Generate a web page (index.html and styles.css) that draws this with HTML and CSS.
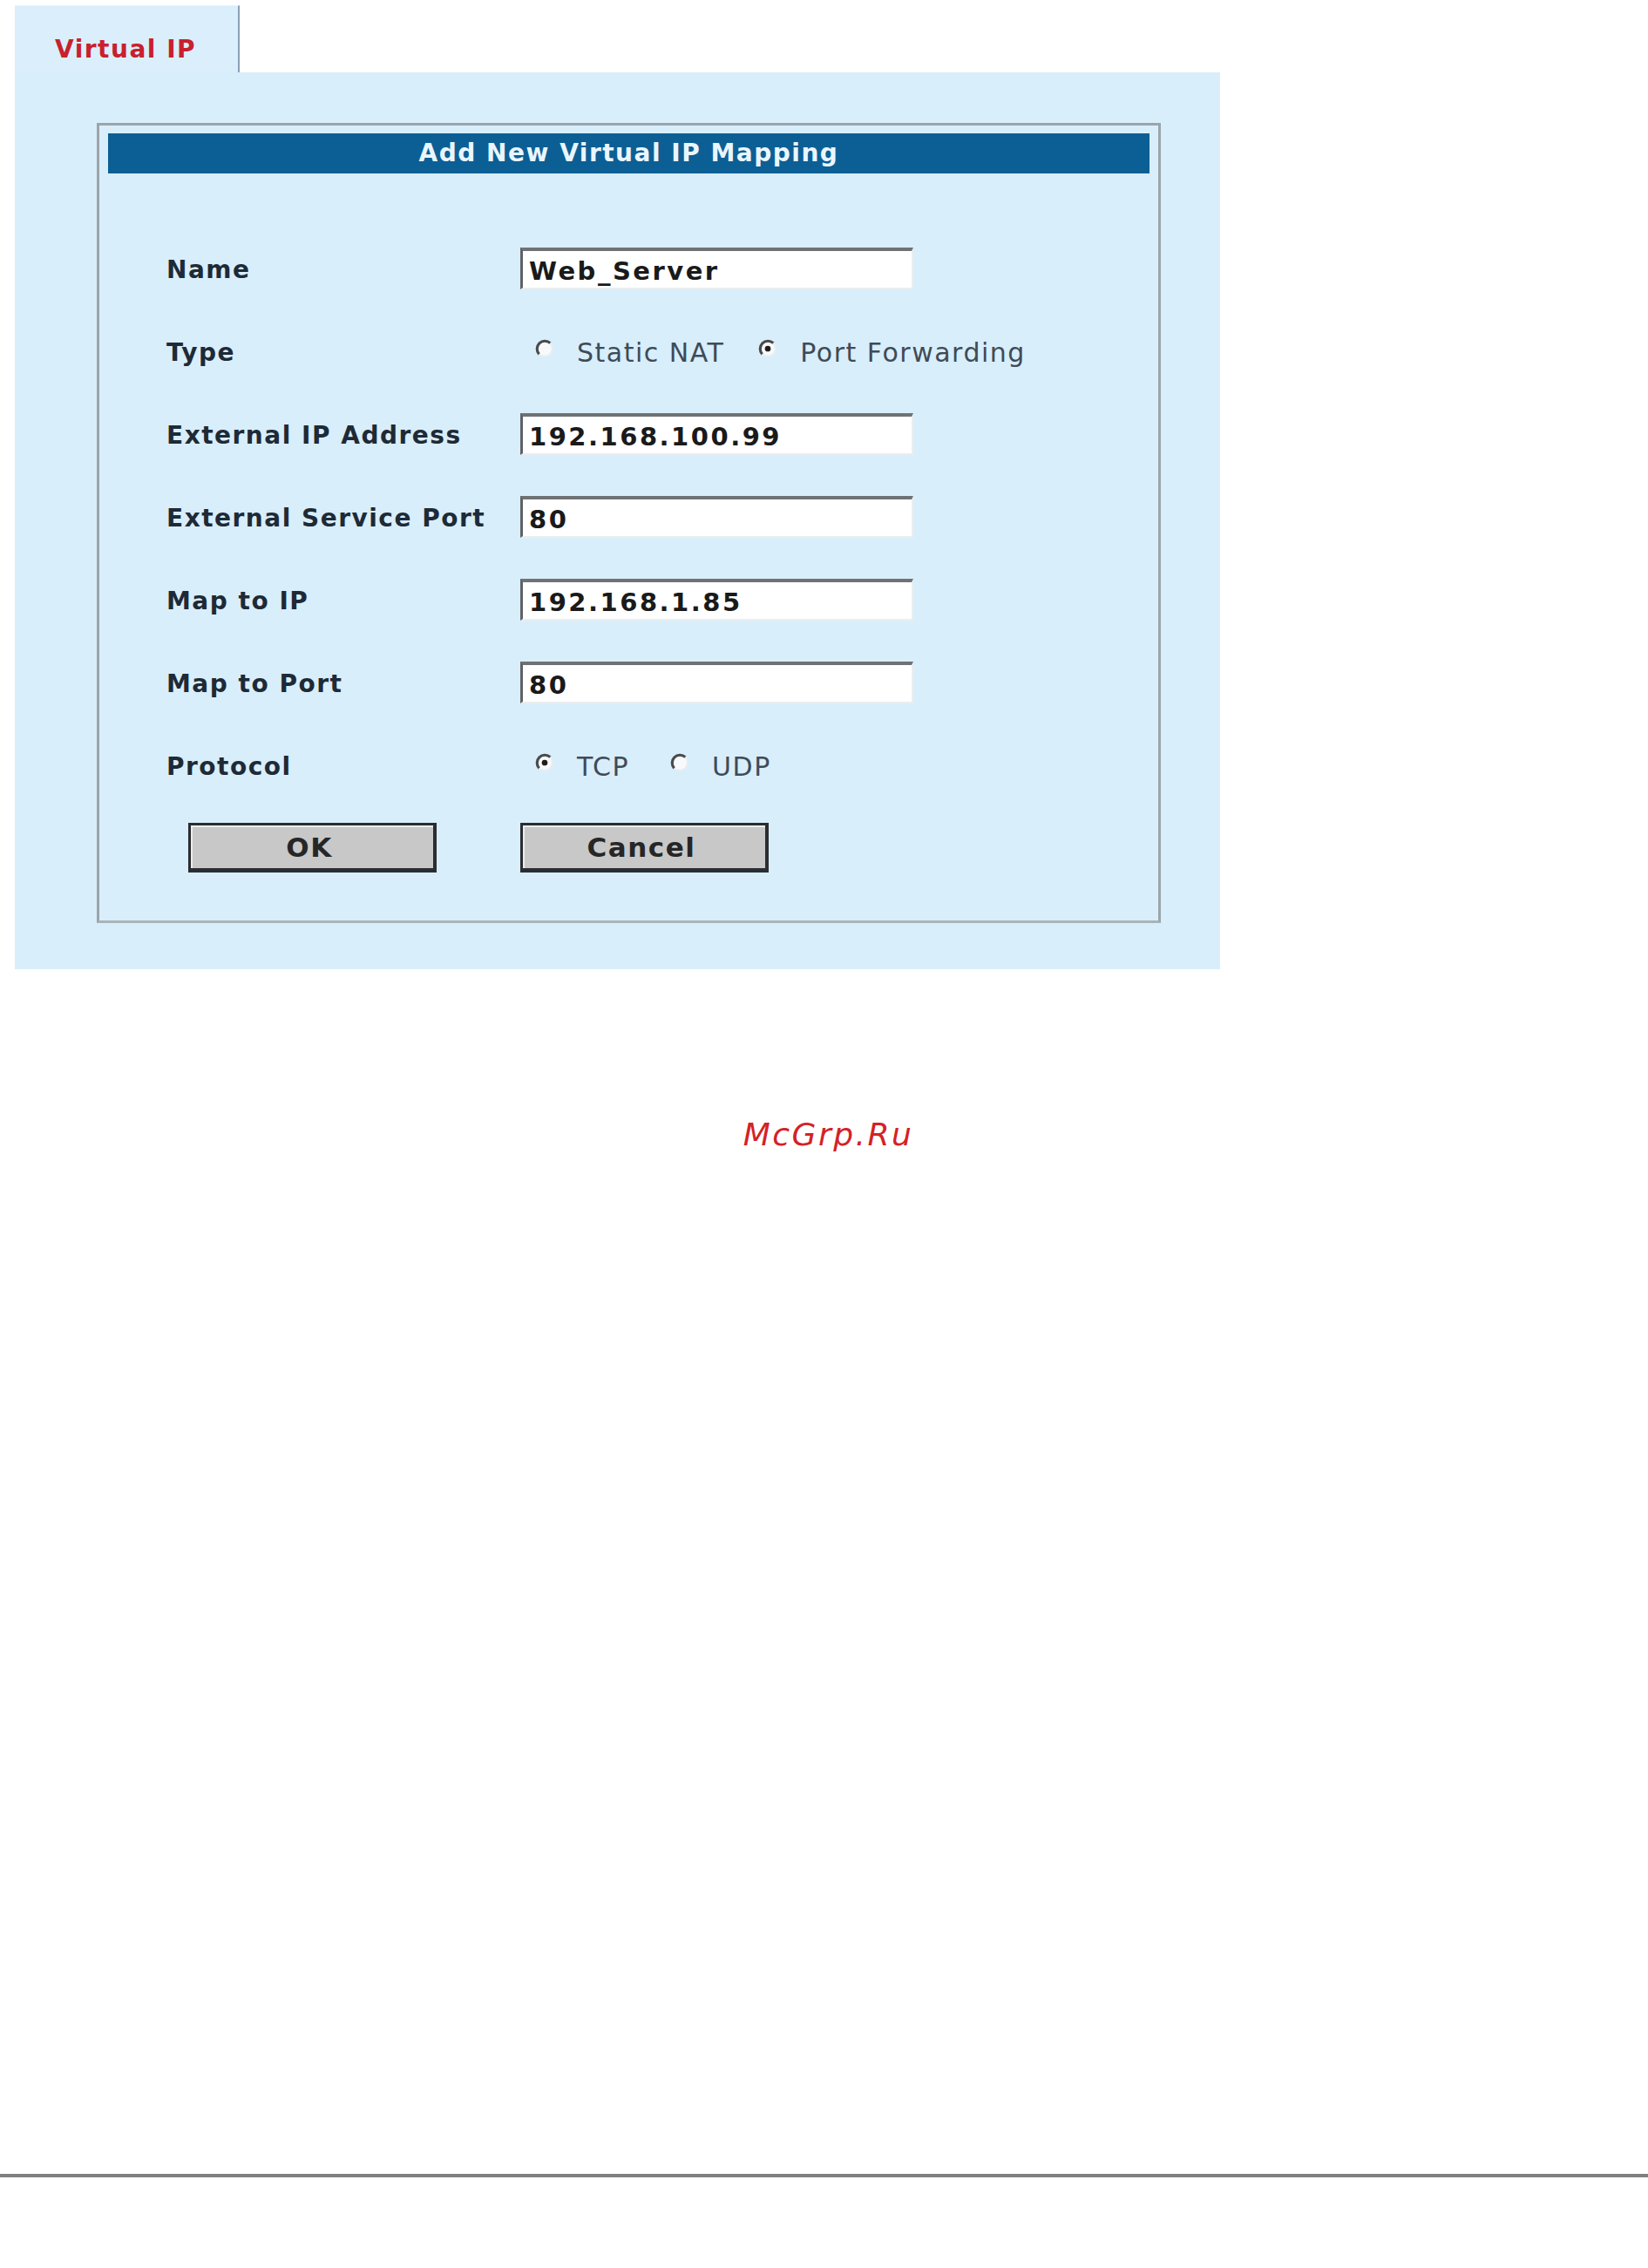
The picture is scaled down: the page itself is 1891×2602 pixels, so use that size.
FILE: index.html
```html
<!DOCTYPE html>
<html lang="en">
<head>
<meta charset="utf-8">
<title>Virtual IP</title>
<link rel="stylesheet" href="styles.css">
</head>
<body>
<div class="page">
  <div class="tabs">
    <div class="tab">Virtual IP</div>
  </div>
  <div class="panel">
    <div class="dialog">
      <div class="dialog-title">Add New Virtual IP Mapping</div>
      <div class="form">
        <div class="row">
          <span class="label">Name</span>
          <span class="field">Web_Server</span>
        </div>
        <div class="row">
          <span class="label">Type</span>
          <div class="choices choices-type">
            <span class="option">
              <svg class="radio" viewBox="0 0 20 20"><circle cx="10" cy="10" r="7.5" fill="#f7f9fa"/><path d="M4.7 15.3 A7.5 7.5 0 0 1 15.3 4.7" stroke="#4a4a4a" stroke-width="2.6" fill="none"/><path d="M15.3 4.7 A7.5 7.5 0 0 1 4.7 15.3" stroke="#e9eef1" stroke-width="1.6" fill="none"/></svg>
              <span class="choice">Static NAT</span>
            </span>
            <span class="option">
              <svg class="radio" viewBox="0 0 20 20"><circle cx="10" cy="10" r="7.5" fill="#f7f9fa"/><path d="M4.7 15.3 A7.5 7.5 0 0 1 15.3 4.7" stroke="#4a4a4a" stroke-width="2.6" fill="none"/><path d="M15.3 4.7 A7.5 7.5 0 0 1 4.7 15.3" stroke="#e9eef1" stroke-width="1.6" fill="none"/><circle cx="10" cy="10" r="2.8" fill="#1e1e1e"/></svg>
              <span class="choice">Port Forwarding</span>
            </span>
          </div>
        </div>
        <div class="row">
          <span class="label">External IP Address</span>
          <span class="field">192.168.100.99</span>
        </div>
        <div class="row">
          <span class="label">External Service Port</span>
          <span class="field">80</span>
        </div>
        <div class="row">
          <span class="label">Map to IP</span>
          <span class="field">192.168.1.85</span>
        </div>
        <div class="row">
          <span class="label">Map to Port</span>
          <span class="field">80</span>
        </div>
        <div class="row">
          <span class="label">Protocol</span>
          <div class="choices choices-protocol">
            <span class="option">
              <svg class="radio" viewBox="0 0 20 20"><circle cx="10" cy="10" r="7.5" fill="#f7f9fa"/><path d="M4.7 15.3 A7.5 7.5 0 0 1 15.3 4.7" stroke="#4a4a4a" stroke-width="2.6" fill="none"/><path d="M15.3 4.7 A7.5 7.5 0 0 1 4.7 15.3" stroke="#e9eef1" stroke-width="1.6" fill="none"/><circle cx="10" cy="10" r="2.8" fill="#1e1e1e"/></svg>
              <span class="choice">TCP</span>
            </span>
            <span class="option">
              <svg class="radio" viewBox="0 0 20 20"><circle cx="10" cy="10" r="7.5" fill="#f7f9fa"/><path d="M4.7 15.3 A7.5 7.5 0 0 1 15.3 4.7" stroke="#4a4a4a" stroke-width="2.6" fill="none"/><path d="M15.3 4.7 A7.5 7.5 0 0 1 4.7 15.3" stroke="#e9eef1" stroke-width="1.6" fill="none"/></svg>
              <span class="choice">UDP</span>
            </span>
          </div>
        </div>
        <div class="actions">
          <button class="btn btn-ok" type="button">OK</button>
          <button class="btn" type="button">Cancel</button>
        </div>
      </div>
    </div>
  </div>
</div>
<div class="brand">McGrp.Ru</div>
<div class="rule"></div>
</body>
</html>
```

FILE: styles.css
```css
html, body {
  margin: 0;
  padding: 0;
  background: #ffffff;
}

body {
  font-family: "DejaVu Sans", Verdana, sans-serif;
  color: #1c2733;
}

.page {
  padding: 6px 0 0 17px;
}

/* tab strip */
.tabs {
  display: flex;
}

.tab {
  width: 258px;
  height: 77px;
  box-sizing: border-box;
  background: #daeffb;
  border-right: 2px solid #8aa0b6;
  border-top: 1px solid #e6f2fa;
  padding: 33px 0 0 46px;
  font-weight: bold;
  font-size: 28px;
  letter-spacing: 1.5px;
  color: #c8202e;
}

/* light blue content panel */
.panel {
  width: 1383px;
  box-sizing: border-box;
  background: #d8eefb;
  padding: 58px 0 53px 94px;
}

.dialog {
  width: 1221px;
  box-sizing: border-box;
  border: 3px solid #9ba4aa;
  border-bottom-color: #aab3b9;
  padding: 9px 10px 0 10px;
}

.dialog-title {
  height: 46px;
  background: #0c5f94;
  color: #eaf6ff;
  font-weight: bold;
  font-size: 28px;
  letter-spacing: 1.5px;
  line-height: 46px;
  text-align: center;
}

.form {
  padding: 63px 0 55px 67px;
}

.row {
  display: flex;
  align-items: center;
  height: 95px;
}

.label {
  width: 406px;
  flex: none;
  font-weight: bold;
  font-size: 28px;
  letter-spacing: 1.5px;
  color: #1e2a36;
}

.field {
  width: 451px;
  height: 48px;
  box-sizing: border-box;
  background: #ffffff;
  border-top: 4px solid #6f7275;
  border-left: 3px solid #5f6265;
  border-right: 2px solid #e9eef1;
  border-bottom: 2px solid #e9eef1;
  padding-left: 7px;
  font-weight: bold;
  font-size: 29px;
  letter-spacing: 2.5px;
  line-height: 47px;
  color: #1a1a1a;
  margin-top: -4px;
}

.choices {
  display: flex;
  align-items: center;
  padding-left: 16px;
}

.choices-type {
  gap: 38px;
}

.choices-protocol {
  gap: 46px;
}

.option {
  display: flex;
  align-items: center;
  gap: 25px;
}

.radio {
  width: 24px;
  height: 24px;
  flex: none;
  margin-top: -9px;
}

.choice {
  font-size: 30px;
  letter-spacing: 1.5px;
  color: #3f4b57;
}

.actions {
  display: flex;
  gap: 96px;
  padding: 17px 0 0 25px;
}

.btn {
  width: 285px;
  height: 57px;
  box-sizing: border-box;
  background: #c8c8c8;
  border: 3px solid #2a2d30;
  border-bottom-width: 5px;
  border-right-width: 4px;
  box-shadow: inset 2px 2px 0 #ececec;
  font-family: "DejaVu Sans", Verdana, sans-serif;
  font-weight: bold;
  font-size: 31px;
  letter-spacing: 1.5px;
  color: #262626;
  padding: 0 6px 0 0;
}

.brand {
  margin-top: 169px;
  padding-left: 10px;
  text-align: center;
  font-family: "DejaVu Sans", Verdana, sans-serif;
  font-style: italic;
  font-size: 36px;
  letter-spacing: 2.5px;
  line-height: 42px;
  color: #d42226;
}

.rule {
  margin-top: 1171px;
  height: 4px;
  background: #808080;
}
```
